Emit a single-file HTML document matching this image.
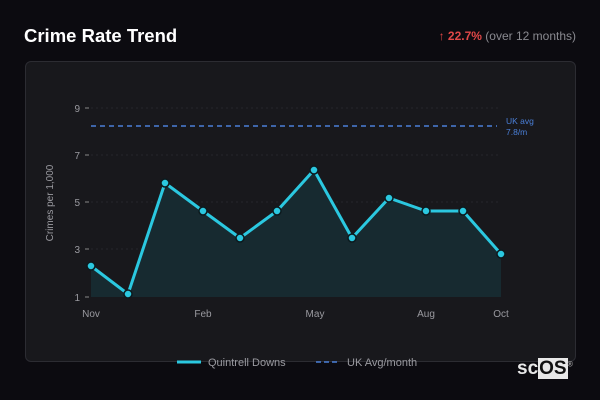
<!DOCTYPE html>
<html><head><style>
body{margin:0;width:600px;height:400px;background:#0c0b10;font-family:"Liberation Sans",sans-serif;position:relative;overflow:hidden}
.t{position:absolute;left:24px;top:25px;color:#fff;font-weight:bold;font-size:18.5px}
.r{position:absolute;right:24px;top:29px;font-size:12px;color:#8a8a90}
.r b{color:#e04848}
.card{position:absolute;left:25px;top:61px;width:549px;height:299px;background:#18181c;border:1px solid #2c2c32;border-radius:6px}
.logo{position:absolute;left:517px;top:358px;font-weight:bold;font-size:19px;color:#e8e8e8}
.logo span{background:#e8e8e8;color:#111;padding:0 1px}
</style></head><body>
<div class="t">Crime Rate Trend</div>
<div class="r"><span style="color:#e04848">↑</span> <b>22.7%</b> (over 12 months)</div>
<div class="card"></div>
<svg style="position:absolute;left:0;top:0" width="600" height="400" font-family="Liberation Sans, sans-serif">
<g stroke="#26262b" stroke-dasharray="2,3" stroke-width="1">
<line x1="91" y1="108" x2="501" y2="108"/><line x1="91" y1="155" x2="501" y2="155"/><line x1="91" y1="202" x2="501" y2="202"/><line x1="91" y1="249" x2="501" y2="249"/>
</g>
<g stroke="#888" stroke-width="1"><line x1="85" y1="108" x2="89" y2="108"/><line x1="85" y1="155" x2="89" y2="155"/><line x1="85" y1="202" x2="89" y2="202"/><line x1="85" y1="249" x2="89" y2="249"/><line x1="85" y1="297" x2="89" y2="297"/></g>
<g fill="#9a9aa0" font-size="10" text-anchor="end"><text x="80" y="112">9</text><text x="80" y="159">7</text><text x="80" y="206">5</text><text x="80" y="253">3</text><text x="80" y="301">1</text></g>
<text transform="translate(53,203) rotate(-90)" fill="#9a9aa0" font-size="10" text-anchor="middle">Crimes per 1,000</text>
<g fill="#9a9aa0" font-size="10" text-anchor="middle"><text x="91" y="317">Nov</text><text x="203" y="317">Feb</text><text x="315" y="317">May</text><text x="426" y="317">Aug</text><text x="501" y="317">Oct</text></g>
<line x1="91" y1="126" x2="497" y2="126" stroke="#4a7fd8" stroke-width="1.5" stroke-dasharray="5,4"/>
<text x="506" y="124" fill="#4a7fd8" font-size="8.5">UK avg</text><text x="506" y="135" fill="#4a7fd8" font-size="8.5">7.8/m</text>
<polygon fill="#172a30" points="91,297 91,266 128,294 165,183 203,211 240,238 277,211 314,170 352,238 389,198 426,211 463,211 501,254 501,297"/>
<polyline fill="none" stroke="#2bc8e0" stroke-width="3" stroke-linejoin="round" points="91,266 128,294 165,183 203,211 240,238 277,211 314,170 352,238 389,198 426,211 463,211 501,254"/>
<g fill="#2bc8e0" stroke="#0c1a1e" stroke-width="1.5">
<circle cx="91" cy="266" r="4"/><circle cx="128" cy="294" r="4"/><circle cx="165" cy="183" r="4"/><circle cx="203" cy="211" r="4"/><circle cx="240" cy="238" r="4"/><circle cx="277" cy="211" r="4"/><circle cx="314" cy="170" r="4"/><circle cx="352" cy="238" r="4"/><circle cx="389" cy="198" r="4"/><circle cx="426" cy="211" r="4"/><circle cx="463" cy="211" r="4"/><circle cx="501" cy="254" r="4"/>
</g>
<line x1="177" y1="362" x2="201" y2="362" stroke="#2bc8e0" stroke-width="3"/>
<text x="208" y="366" fill="#9a9aa0" font-size="11">Quintrell Downs</text>
<line x1="316" y1="362" x2="340" y2="362" stroke="#4a7fd8" stroke-width="1.5" stroke-dasharray="5,3"/>
<text x="347" y="366" fill="#9a9aa0" font-size="11">UK Avg/month</text>
</svg>
<div class="logo">sc<span>OS</span><sup style="font-size:7px;color:#aaa">®</sup></div>
</body></html>
